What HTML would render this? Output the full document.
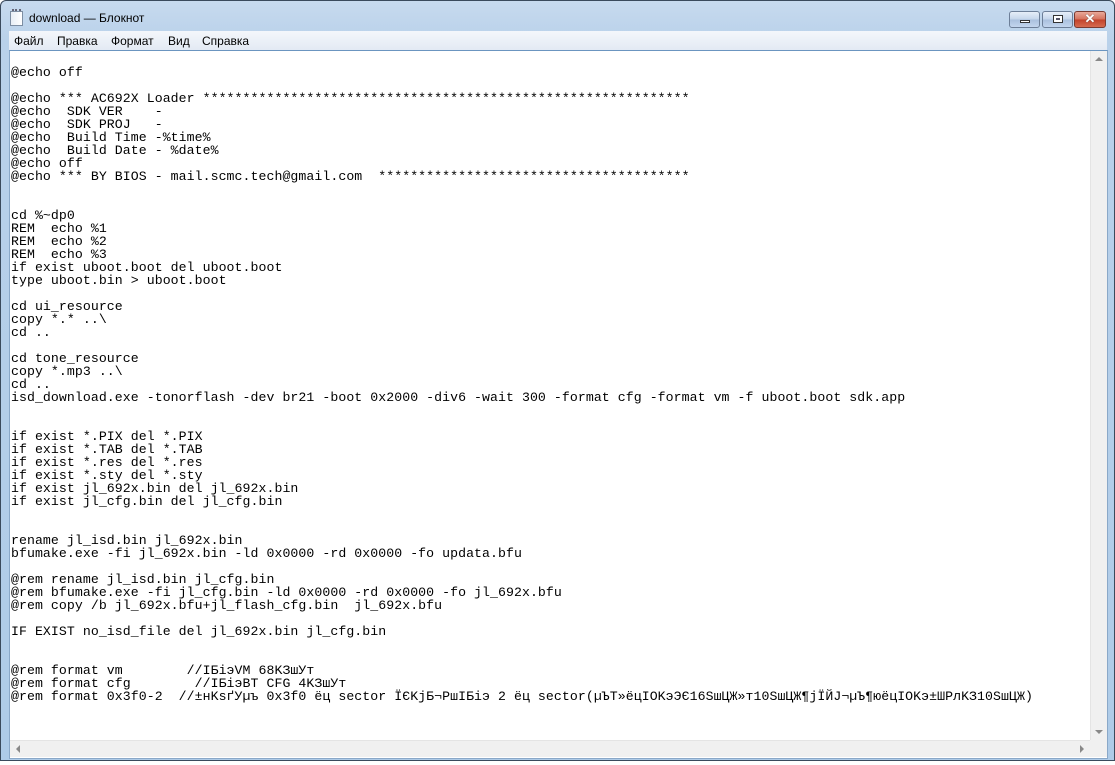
<!DOCTYPE html>
<html><head><meta charset="utf-8"><style>
*{margin:0;padding:0;box-sizing:border-box}
body{width:1115px;height:765px;overflow:hidden;background:#fff;position:relative;font-family:"Liberation Sans",sans-serif}
#frame{position:absolute;left:0;top:0;width:1115px;height:761px;background:linear-gradient(#c7daee,#b9d1ea 40px,#aecbe8);border:1px solid #3a4a5c;border-radius:6px 6px 0 0}
#title{position:absolute;left:28px;top:10px;font-size:12px;color:#000}
#icon{position:absolute;left:9px;top:10px;width:13px;height:15px;background:linear-gradient(90deg,#e8eef6,#fff);border:1px solid #7d8ea3}
#icon:before{content:"";position:absolute;left:1px;top:-3px;width:9px;height:3px;border-top:2px dotted #667}
.btn{position:absolute;top:10px;height:17px;border:1px solid #6d7f98;border-radius:3px;background:linear-gradient(#e6eef8,#c4d5ea 50%,#a9c0dd 51%,#c3d6ee)}
#cls{background:linear-gradient(#e9a99a,#d4705b 50%,#c2412a 51%,#d66b4f);border-color:#7a3a30}
#menu{position:absolute;left:8px;top:30px;width:1098px;height:20px;background:linear-gradient(#f4f7fb,#e2e9f3);font-size:12px}
#menu span{position:absolute;top:3px}
#edit{position:absolute;left:8px;top:49px;width:1099px;height:709px;background:#fff;border:1px solid #8aa8c8;border-top:1px solid #6b95c0}
pre{position:absolute;left:1px;top:2px;font-family:"Liberation Mono","DejaVu Sans Mono",monospace;font-size:13.2px;letter-spacing:0.07px;line-height:13px;color:#000;white-space:pre}
#vs{position:absolute;left:1080px;top:0;width:17px;height:689px;background:#f0f0f0;border-left:1px solid #e4e4e4}
#hs{position:absolute;left:0;top:689px;width:1080px;height:17px;background:#f0f0f0;border-top:1px solid #e4e4e4}
#gr{position:absolute;left:1080px;top:689px;width:17px;height:17px;background:#f0f0f0}
.ar{position:absolute;width:0;height:0;border:4px solid transparent}
</style></head><body>
<div id="frame">
<div id="icon"></div>
<div id="title">download — Блокнот</div>
<div class="btn" style="left:1008px;width:31px"><div style="position:absolute;left:10px;top:8px;width:10px;height:3px;background:#fff;border:1px solid #333"></div></div>
<div class="btn" style="left:1041px;width:31px"><div style="position:absolute;left:10px;top:3px;width:10px;height:8px;border:1px solid #333;background:#fff"><div style="margin:2px;width:4px;height:2px;background:#556"></div></div></div>
<div class="btn" id="cls" style="left:1073px;width:32px"><div style="position:absolute;left:0;top:-1px;width:30px;text-align:center;color:#fff;font-weight:bold;font-size:13px;text-shadow:0 0 1px #333">✕</div></div>
<div id="menu"><span style="left:5px">Файл</span><span style="left:48px">Правка</span><span style="left:102px">Формат</span><span style="left:159px">Вид</span><span style="left:193px">Справка</span></div>
<div id="edit">
<pre>

@echo off

@echo *** AC692X Loader *************************************************************
@echo  SDK VER    -
@echo  SDK PROJ   -
@echo  Build Time -%time%
@echo  Build Date - %date%
@echo off
@echo *** BY BIOS - mail.scmc.tech@gmail.com  ***************************************


cd %~dp0
REM  echo %1
REM  echo %2
REM  echo %3
if exist uboot.boot del uboot.boot
type uboot.bin &gt; uboot.boot

cd ui_resource
copy *.* ..\
cd ..

cd tone_resource
copy *.mp3 ..\
cd ..
isd_download.exe -tonorflash -dev br21 -boot 0x2000 -div6 -wait 300 -format cfg -format vm -f uboot.boot sdk.app


if exist *.PIX del *.PIX
if exist *.TAB del *.TAB
if exist *.res del *.res
if exist *.sty del *.sty
if exist jl_692x.bin del jl_692x.bin
if exist jl_cfg.bin del jl_cfg.bin


rename jl_isd.bin jl_692x.bin
bfumake.exe -fi jl_692x.bin -ld 0x0000 -rd 0x0000 -fo updata.bfu

@rem rename jl_isd.bin jl_cfg.bin
@rem bfumake.exe -fi jl_cfg.bin -ld 0x0000 -rd 0x0000 -fo jl_692x.bfu
@rem copy /b jl_692x.bfu+jl_flash_cfg.bin  jl_692x.bfu

IF EXIST no_isd_file del jl_692x.bin jl_cfg.bin


@rem format vm        //IБiэVM 68KЗшУт
@rem format cfg        //IБiэВТ CFG 4KЗшУт
@rem format 0x3f0-2  //±нKsґУµъ 0x3f0 ёц sector ЇЄKjБ¬РшIБiэ 2 ёц sector(µЪТ»ёцIOKэЭЄ16SшЦЖ»т10SшЦЖ¶jЇЙЈ¬µЪ¶юёцIOKэ±ШРлKЗ10SшЦЖ)
</pre>
<div id="vs"><div class="ar" style="left:4px;top:2px;border-bottom-color:#888"></div><div class="ar" style="left:4px;top:679px;border-top-color:#888"></div></div>
<div id="hs"><div class="ar" style="left:2px;top:4px;border-right-color:#888"></div><div class="ar" style="left:1070px;top:4px;border-left-color:#888"></div></div>
<div id="gr"></div>
</div>
</div>
</body></html>
